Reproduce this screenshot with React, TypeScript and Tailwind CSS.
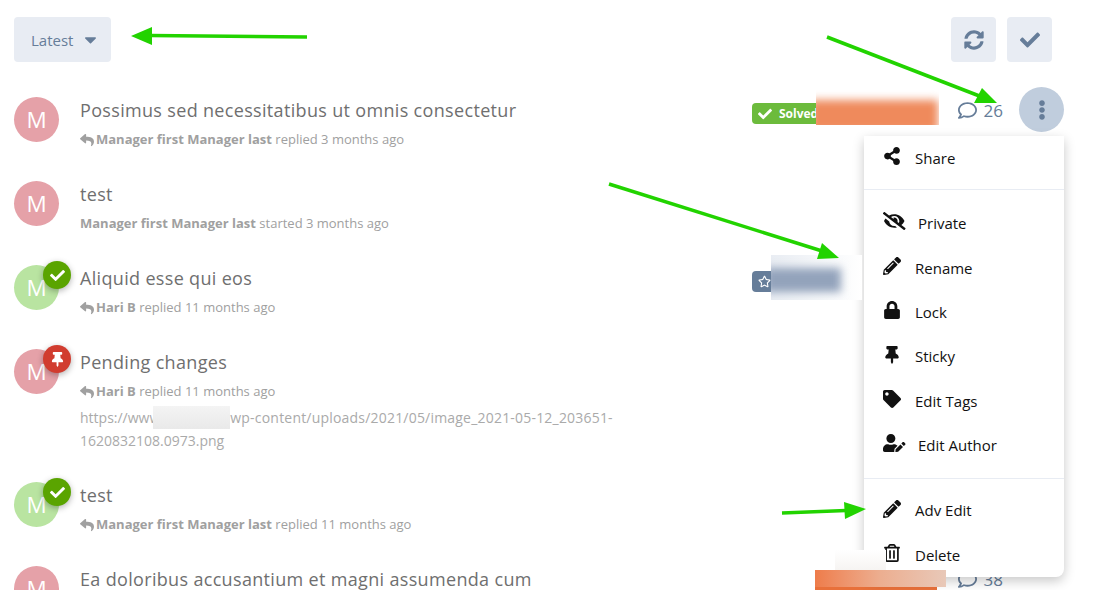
import React from 'react';
import {
  FaCaretDown, FaCheck, FaEllipsisV, FaEyeSlash, FaLock, FaPencilAlt, FaRegComment, FaRegStar,
  FaRegTrashAlt, FaReply, FaShareAlt, FaSyncAlt, FaTag, FaThumbtack, FaUserEdit,
} from 'react-icons/fa';

type Row = {
  title: string;
  user?: string;
  verb?: string;
  pink: boolean;
  badge?: 'check' | 'pin';
  reply: boolean;
  url?: boolean;
  side?: React.ReactNode;
};

const rows: Row[] = [
  {
    title: 'Possimus sed necessitatibus ut omnis consectetur',
    user: 'Manager first Manager last',
    verb: 'replied 3 months ago',
    pink: true,
    reply: true,
    side: (
      <>
        <span className="flex h-[21px] w-[90px] items-center gap-[7px] rounded-[4px] bg-[#6cbb3c] pl-[6px] text-[12px] font-bold text-white">
          <FaCheck className="text-[14px]" />
          Solved
        </span>
        <Count value="26" />
      </>
    ),
  },
  { title: 'test', user: 'Manager first Manager last', verb: 'started 3 months ago', pink: true, reply: false },
  {
    title: 'Aliquid esse qui eos',
    user: 'Hari B',
    verb: 'replied 11 months ago',
    pink: false,
    badge: 'check',
    reply: true,
    side: (
      <span className="flex h-[21px] w-[90px] items-center rounded-[4px] bg-[#667d99] pl-[6px] text-white">
        <FaRegStar className="text-[13px]" />
      </span>
    ),
  },
  {
    title: 'Pending changes',
    user: 'Hari B',
    verb: 'replied 11 months ago',
    pink: true,
    badge: 'pin',
    reply: true,
    url: true,
  },
  { title: 'test', user: 'Manager first Manager last', verb: 'replied 11 months ago', pink: false, badge: 'check', reply: true },
  {
    title: 'Ea doloribus accusantium et magni assumenda cum',
    pink: true,
    reply: false,
    side: (
      <>
        <span className="ml-[63px] h-[21px] w-[122px] rounded-[4px] bg-[#e8703a]" />
        <Count value="38" />
      </>
    ),
  },
];

function Count({ value }: { value: string }) {
  return (
    <span className="absolute right-[61px] top-[-5px] flex items-center gap-[7px] text-[17px] text-[#667d99]">
      <FaRegComment className="text-[19px]" />
      {value}
    </span>
  );
}

function MenuItem({ icon, label, w = 'w-[32px]' }: { icon: React.ReactNode; label: string; w?: string }) {
  return (
    <div className="flex h-[44.4px] items-center pl-[19px] text-[15px] text-[#111]">
      <span className={`${w} flex shrink-0 -translate-y-[2px] items-center text-[18px]`}>{icon}</span>
      {label}
    </div>
  );
}

function Arrow({ line, head }: { line: string; head: string }) {
  return (
    <>
      <path d={line} stroke="#22d300" strokeWidth="3.5" fill="none" />
      <polygon points={head} fill="#22d300" />
    </>
  );
}

export default function App() {
  return (
    <div className="relative h-[590px] w-[1099px] overflow-hidden bg-white font-['Open_Sans',sans-serif]">
      <div className="pl-[14px] pr-[35px] pt-[17px]">
        <div className="flex items-start justify-between pr-[12px]">
          <button className="flex h-[45px] w-[97px] items-center rounded-[4px] bg-[#e8ecf3] pl-[17px] text-[15px] text-[#667d99]">
            <span className="translate-y-[1px]">Latest</span>
            <FaCaretDown className="ml-[8px] text-[19px]" />
          </button>
          <div className="flex gap-[11px]">
            <button className="flex h-[45px] w-[45px] items-center justify-center rounded-[4px] bg-[#e8ecf3] text-[20px] text-[#667d99]">
              <FaSyncAlt />
            </button>
            <button className="flex h-[45px] w-[45px] items-center justify-center rounded-[4px] bg-[#e8ecf3] text-[20px] text-[#667d99]">
              <FaCheck />
            </button>
          </div>
        </div>

        <div className="mt-[35px]">
          {rows.map((row, i) => (
            <div key={i} className={`flex ${row.url ? 'h-[133px]' : 'h-[84px]'}`}>
              <div className="relative h-[45px] w-[45px] shrink-0">
                <div className={`h-[45px] w-[45px] rounded-full text-center text-[22.5px] leading-[45px] text-white ${row.pink ? 'bg-[#e5a1a8]' : 'bg-[#b9e4a1]'}`}>
                  M
                </div>
                {row.badge && (
                  <div className={`absolute left-[29px] top-[-4px] flex h-[28px] w-[28px] items-center justify-center rounded-full text-[15px] text-white shadow-[0_2px_6px_rgba(0,0,0,0.3)] ${row.badge === 'check' ? 'bg-[#5aa400]' : 'bg-[#d13c2f]'}`}>
                    {row.badge === 'check' ? <FaCheck /> : <FaThumbtack />}
                  </div>
                )}
              </div>
              <div className="ml-[21px] min-w-0 flex-1">
                <div className="text-[18px] leading-[27px] tracking-[0.33px] text-[#6f6f6f]">{row.title}</div>
                {row.user && (
                  <div className="mt-[1px] flex h-[30px] items-center text-[13px] text-[#a0a0a0]">
                    {row.reply && <FaReply className="mr-[2px] text-[14px]" />}
                    <span><b className="font-bold">{row.user}</b> {row.verb}</span>
                  </div>
                )}
                {row.url && (
                  <div className="-mt-[1px] text-[14px] leading-[23px] text-[#aaaaaa]">
                    https://www
                    <span className="ml-[-7px] inline-block h-[23px] w-[77px] bg-gradient-to-b from-[#f4f4f4] to-[#e9e9e9] align-top" />
                    <span className="tracking-[0.2px]">wp-content/uploads/2021/05/image_2021-05-12_203651-</span>
                    <br />
                    1620832108.0973.png
                  </div>
                )}
              </div>
              <div className="relative flex h-[21px] w-[312px] shrink-0 translate-y-[6px] items-start">{row.side}</div>
            </div>
          ))}
        </div>
      </div>

      {/* more button and its menu */}
      <button className="absolute left-[1019px] top-[87px] flex h-[45px] w-[45px] items-center justify-center rounded-full bg-[#c0cddd] text-[20px] text-[#667d99]">
        <FaEllipsisV />
      </button>
      <div className="absolute left-[864px] top-[136px] w-[200px] rounded-b-[8px] bg-white shadow-[0_4px_12px_rgba(0,0,0,0.22)]">
        <MenuItem icon={<FaShareAlt />} label="Share" />
        <div className="mb-[10.8px] mt-[9px] h-px bg-[#e8ecf3]" />
        <MenuItem icon={<FaEyeSlash className="h-[18px] w-[22.5px]" />} label="Private" w="w-[35px]" />
        <MenuItem icon={<FaPencilAlt />} label="Rename" />
        <MenuItem icon={<FaLock />} label="Lock" />
        <MenuItem icon={<FaThumbtack />} label="Sticky" />
        <MenuItem icon={<FaTag />} label="Edit Tags" />
        <MenuItem icon={<FaUserEdit className="h-[18px] w-[22.5px]" />} label="Edit Author" w="w-[35px]" />
        <div className="mb-[10px] mt-[10px] h-px bg-[#e8ecf3]" />
        <MenuItem icon={<FaPencilAlt />} label="Adv Edit" />
        <MenuItem icon={<FaRegTrashAlt />} label="Delete" />
      </div>

      {/* blurred patches that hide text in the shot */}
      <div className="absolute left-[816px] top-[88px] h-[37px] w-[123px] overflow-hidden bg-white">
        <div className="ml-[-6px] mt-[12px] h-[32px] w-[128px] bg-[#ef8a5c] blur-[4px]" />
      </div>
      <div className="absolute left-[771px] top-[255px] h-[45px] w-[91px] overflow-hidden bg-gradient-to-r from-[#e9edf3] to-white">
        <div className="ml-[-6px] mt-[13px] h-[24px] w-[76px] bg-[#93a3bb] blur-[4px]" />
      </div>
      <div className="absolute left-[835px] top-[550px] h-[20px] w-[51px] bg-gradient-to-b from-white to-[#f6f4f2]" />
      <div className="absolute left-[815px] top-[570px] h-[17px] w-[131px] bg-gradient-to-r from-[#ee7c4a] via-[#ecae90] to-[#e8c8b8]" />

      {/* green annotation arrows */}
      <svg className="pointer-events-none absolute left-0 top-0" width="1099" height="590">
        <Arrow line="M307 37 L150 35.5" head="131,36 152,27 152,45" />
        <Arrow line="M827 37 L982 97" head="997,103 982,88 974,103" />
        <Arrow line="M609 184 L822 251" head="839,258 822,243 817,259" />
        <Arrow line="M782 513 L846 510.5" head="866,509 844,502 845,519" />
      </svg>
    </div>
  );
}
